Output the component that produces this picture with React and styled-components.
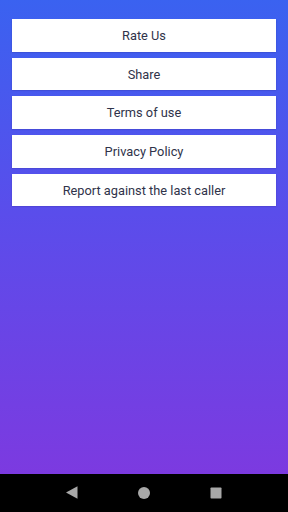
import React from "react";
import styled, { createGlobalStyle } from "styled-components";

const Global = createGlobalStyle`
  html, body { margin: 0; padding: 0; height: 100%; }
  body { font-family: Roboto, "Noto Sans", "Liberation Sans", sans-serif; }
  #root { height: 100%; }
`;

const Screen = styled.div`
  width: 288px;
  height: 512px;
  display: flex;
  flex-direction: column;
  overflow: hidden;
`;

const Content = styled.div`
  flex: 1;
  background: linear-gradient(180deg, #3a62f0 0%, #5a4deb 45%, #7c3ae0 100%);
  display: flex;
  flex-direction: column;
  gap: 6px;
  padding: 19px 12px 0;
`;

const MenuButton = styled.button`
  height: 32.7px;
  width: 100%;
  margin: 0;
  padding: 0;
  background: #ffffff;
  border: none;
  border-radius: 0;
  box-shadow: 0 0.5px 1.5px rgba(40, 30, 120, 0.45);
  font-family: Roboto, "Noto Sans", sans-serif;
  font-size: 12.8px;
  color: #30334a;
  display: flex;
  align-items: center;
  justify-content: center;
  cursor: pointer;
`;

const NavBar = styled.div`
  height: 38.5px;
  background: #000;
  display: flex;
  align-items: center;
  justify-content: center;
`;

const NavSlot = styled.div`
  width: 72px;
  display: flex;
  align-items: center;
  justify-content: center;
`;

const items = [
  "Rate Us",
  "Share",
  "Terms of use",
  "Privacy Policy",
  "Report against the last caller",
];

export default function App() {
  return (
    <>
      <Global />
      <Screen>
        <Content>
          {items.map((t) => (
            <MenuButton key={t}>{t}</MenuButton>
          ))}
        </Content>
        <NavBar>
          <NavSlot>
            <svg width="12" height="13" viewBox="0 0 12 13">
              <polygon points="0,6.5 11.5,0.2 11.5,12.8" fill="#a8a8a8" />
            </svg>
          </NavSlot>
          <NavSlot>
            <svg width="12" height="12" viewBox="0 0 12 12">
              <circle cx="6" cy="6" r="6" fill="#a8a8a8" />
            </svg>
          </NavSlot>
          <NavSlot>
            <svg width="12" height="12" viewBox="0 0 12 12">
              <rect x="0.5" y="0.5" width="11" height="11" rx="0.8" fill="#a8a8a8" />
            </svg>
          </NavSlot>
        </NavBar>
      </Screen>
    </>
  );
}
